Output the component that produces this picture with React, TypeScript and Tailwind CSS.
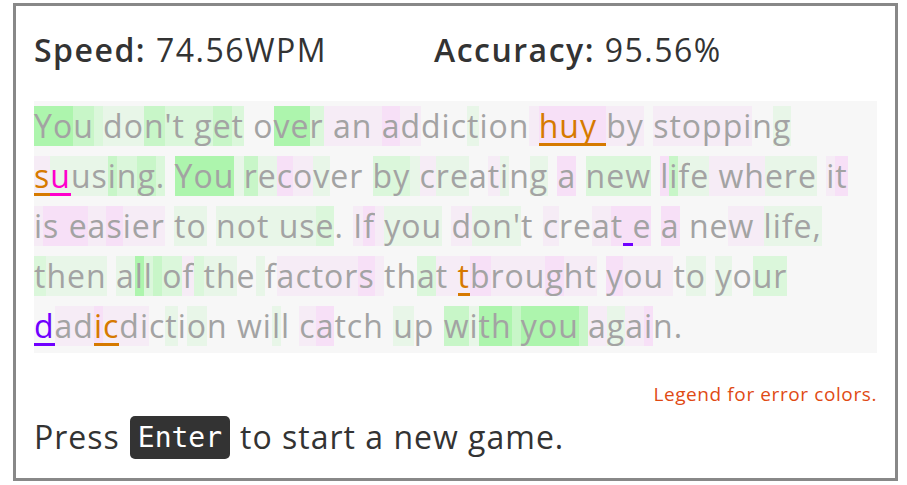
import React from "react";

// heat codes per character: G strong green, g green, l light green, e faint green,
// P pink, p faint pink, "." nothing
const heat: Record<string, string> = {
  G: "bg-[#adf5ad]",
  g: "bg-[#c8f6c8]",
  l: "bg-[#dbf7db]",
  e: "bg-[#e8f6e8]",
  P: "bg-[#f7e0f7]",
  p: "bg-[#f6ecf6]",
  ".": "",
};

// marks: o orange error, m magenta, v violet
const marks: Record<string, string> = {
  o: "text-[#d67a00] border-b-[3px]",
  m: "text-[#f0c] border-b-[3px]",
  v: "text-[#7000ff] border-b-[3px]",
  ".": "",
};

const lines = [
  {
    text: "You don't get over an addiction huy by stopping",
    heat: "GGgleegllllgl..GGlppppPp...e...pPPPPpp.pppppp.e",
    mark: "................................oooo...........",
  },
  {
    text: "suusing. You recover by creating a new life where it",
    heat: "peeeglgl.GGGegePpe...llepee.pe.e.P.lll.Pgeepppeee.pP",
    mark: "om..................................................",
  },
  {
    text: "is easier to not use. If you don't creat e a new life,",
    heat: "pPPPpPppp.ee.eeeeeel..pPpeee.peee..p..pPPP.P...ppeeeee",
    mark: "........................................v.............",
  },
  {
    text: "then all of the factors that tbrought you to your",
    heat: "leee.eGlglplee.e.pppppPp..lpppPpppPpp.Pppp.e.e.lle",
    mark: ".............................o...................",
  },
  {
    text: "dadicdiction will catch up with you again.",
    heat: ".ppPppp.e.e....e..pP....e..geGGgGGGgpepP..",
    mark: "v..oo.....................................",
  },
];

const font = "font-['Open_Sans',sans-serif]";

function TypedLine({ line }: { line: (typeof lines)[number] }) {
  return (
    <div className="flex h-[50px] items-center">
      {line.text.split("").map((ch, i) => (
        <span
          key={i}
          className={`inline-block h-[40px] whitespace-pre leading-[40px] ${heat[line.heat[i]] ?? ""} ${
            marks[line.mark[i]] ?? ""
          }`}
        >
          {ch}
        </span>
      ))}
    </div>
  );
}

export default function App() {
  return (
    <div className="h-[485px] w-[907px] bg-white pt-[3px] pl-[13px]">
      <div className={`flex h-[478px] w-[885px] flex-col border-[3px] border-[#888] px-[18px] pt-[19px] text-[#333] ${font}`}>
        {/* Stats */}
        <div className="flex h-[50px] items-center text-[32px] tracking-[1.5px]">
          <div className="w-[400px]">
            <span className="font-semibold">Speed:</span> 74.56WPM
          </div>
          <div>
            <span className="font-semibold">Accuracy:</span> 95.56%
          </div>
        </div>

        {/* Typed text heat map */}
        <div className="mt-[26px] bg-[#f7f7f7] pb-[2px] text-[32px] tracking-[1px] text-[#a3a3a3]">
          {lines.map((l, i) => (
            <TypedLine key={i} line={l} />
          ))}
        </div>

        <div className="mt-[29px] text-right text-[19px] leading-[24px] tracking-[0.6px] text-[#df4a14]">
          Legend for error colors.
        </div>

        <div className="mt-[6px] flex h-[50px] items-center text-[32px] tracking-[1px]">
          Press
          <kbd className="mx-[10px] rounded-[5px] bg-[#333] px-[8px] font-['DejaVu_Sans_Mono',monospace] text-[28px] leading-[43px] tracking-normal text-white">
            Enter
          </kbd>
          to start a new game.
        </div>
      </div>
    </div>
  );
}
